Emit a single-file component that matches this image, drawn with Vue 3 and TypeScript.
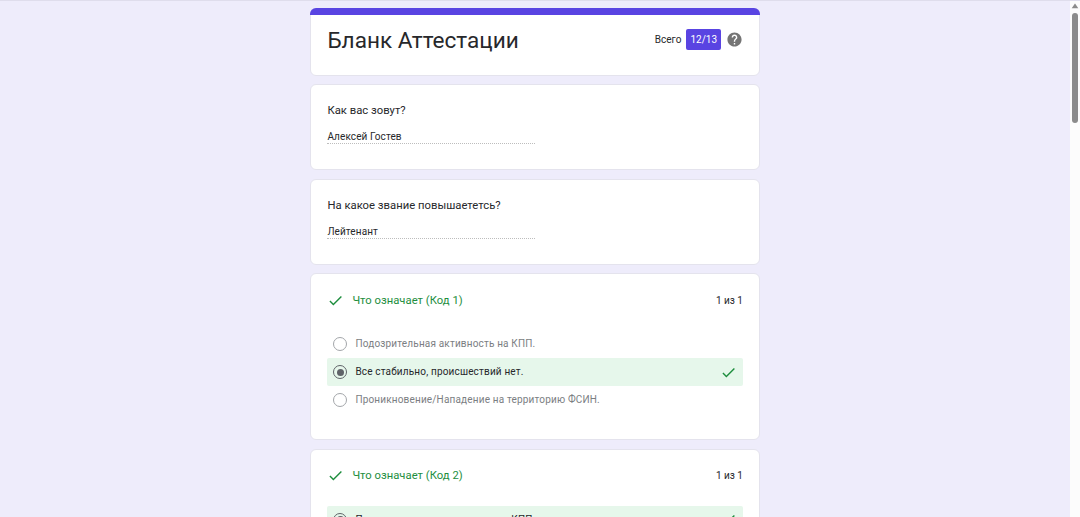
<script setup lang="ts">
interface TextAnswer {
  question: string
  answer: string
}

interface ChoiceQuestion {
  title: string
  score: string
  options: string[]
  selected: number
}

const textAnswers: TextAnswer[] = [
  { question: 'Как вас зовут?', answer: 'Алексей Гостев' },
  { question: 'На какое звание повышаететсь?', answer: 'Лейтенант' },
]

const options = [
  'Подозрительная активность на КПП.',
  'Все стабильно, происшествий нет.',
  'Проникновение/Нападение на территорию ФСИН.',
]

const questions: ChoiceQuestion[] = [
  { title: 'Что означает (Код 1)', score: '1 из 1', options, selected: 1 },
  { title: 'Что означает (Код 2)', score: '1 из 1', options, selected: 0 },
]
</script>

<template>
  <div class="page">
    <aside class="help">
      <svg class="help-icon" viewBox="0 0 24 24">
        <path d="M11 18h2v-2h-2v2zm1-16C6.48 2 2 6.48 2 12s4.48 10 10 10 10-4.48 10-10S17.52 2 12 2zm0 18c-4.41 0-8-3.59-8-8s3.59-8 8-8 8 3.59 8 8-3.59 8-8 8zm0-14c-2.21 0-4 1.79-4 4h2c0-1.1.9-2 2-2s2 .9 2 2c0 2-3 1.75-3 5h2c0-2.25 3-2.5 3-5 0-2.21-1.79-4-4-4z" />
      </svg>
    </aside>

    <main class="form">
      <header class="card header">
        <div class="band"></div>
        <div class="header-row">
          <h1>Бланк Аттестации</h1>
          <div class="total">
            <span>Всего</span>
            <span class="badge">12/13</span>
            <svg class="total-help" viewBox="0 0 24 24">
              <path d="M12 2C6.48 2 2 6.48 2 12s4.48 10 10 10 10-4.48 10-10S17.52 2 12 2zm1 17h-2v-2h2v2zm2.07-7.75l-.9.92C13.45 12.9 13 13.5 13 15h-2v-.5c0-1.1.45-2.1 1.17-2.83l1.24-1.26c.37-.36.59-.86.59-1.41 0-1.1-.9-2-2-2s-2 .9-2 2H8c0-2.21 1.79-4 4-4s4 1.79 4 4c0 .88-.36 1.68-.93 2.25z" />
            </svg>
          </div>
        </div>
      </header>

      <section v-for="item in textAnswers" :key="item.question" class="card text-card">
        <div class="question">{{ item.question }}</div>
        <div class="answer">{{ item.answer }}</div>
      </section>

      <section v-for="item in questions" :key="item.title" class="card choice-card">
        <div class="choice-head">
          <svg class="check" viewBox="0 0 24 24">
            <path d="M9 16.17L4.83 12l-1.42 1.41L9 19 21 7l-1.41-1.41z" />
          </svg>
          <span class="choice-title">{{ item.title }}</span>
          <span class="score">{{ item.score }}</span>
        </div>
        <div
          v-for="(option, index) in item.options"
          :key="index"
          class="option"
          :class="{ selected: index === item.selected }"
        >
          <span class="radio"></span>
          <span class="option-text">{{ option }}</span>
          <svg v-if="index === item.selected" class="check" viewBox="0 0 24 24">
            <path d="M9 16.17L4.83 12l-1.42 1.41L9 19 21 7l-1.41-1.41z" />
          </svg>
        </div>
      </section>
    </main>

    <div class="scrollbar">
      <svg class="arrow" viewBox="0 0 8 6"><path d="M4 .5 7.3 5.3H.7z" /></svg>
      <div class="thumb"></div>
      <svg class="arrow down" viewBox="0 0 8 6"><path d="M4 5.5 7.3.7H.7z" /></svg>
    </div>
  </div>
</template>

<style>
body {
  margin: 0;
  overflow: hidden;
}
</style>

<style scoped>
.page {
  display: grid;
  grid-template-columns: 310px 450.4px 1fr 10px;
  height: 517px;
  overflow: hidden;
  box-sizing: border-box;
  border-top: 1px solid #dfddec;
  background: #eeecfb;
  font-family: Roboto, "Liberation Sans", sans-serif;
  font-size: 10px;
  letter-spacing: 0.1px;
  color: #27282b;
}

.help {
  display: flex;
  align-items: flex-end;
  padding: 0 0 10px 12px;
}

.help-icon {
  width: 17px;
  height: 17px;
  fill: #a09fab;
}

.form {
  display: flex;
  flex-direction: column;
  gap: 8.6px;
  padding-top: 7.4px;
}

.card {
  flex: none;
  box-sizing: border-box;
  border: 1px solid #e4e3ed;
  border-radius: 6px;
  background: #fff;
  padding: 0 16.4px;
}

.header {
  height: 67.2px;
}

.band {
  height: 7px;
  margin: -1px -17.4px 0;
  border-radius: 6px 6px 0 0;
  background: #5944e2;
}

.header-row {
  display: flex;
  align-items: center;
  justify-content: space-between;
  height: 49px;
}

h1 {
  margin: 0;
  padding-top: 3px;
  font-size: 22.55px;
  font-weight: 400;
  letter-spacing: 0;
  line-height: 32px;
}

.total {
  display: flex;
  align-items: center;
  letter-spacing: 0;
}

.badge {
  margin: 0 5px;
  padding: 0 4px;
  border-radius: 2px;
  background: #5944e2;
  color: #fff;
  line-height: 21px;
}

.total-help {
  width: 17px;
  height: 17px;
  fill: #757575;
}

.text-card {
  height: 86px;
  padding-top: 17px;
}

.question {
  font-size: 11.25px;
  letter-spacing: 0.02px;
  line-height: 17px;
}

.answer {
  width: 208px;
  margin-top: 11px;
  padding-top: 1px;
  border-bottom: 1px dotted #bdbdbd;
  line-height: 12px;
}

.choice-card {
  height: 167px;
}

.choice-head {
  display: flex;
  align-items: center;
  height: 50px;
  padding-top: 1px;
  margin-bottom: 5px;
}

.check {
  flex: none;
  width: 17px;
  height: 17px;
  fill: #1e8e3e;
}

.choice-title {
  flex: 1;
  margin-left: 8px;
  color: #1e8e3e;
  font-size: 11.25px;
  letter-spacing: 0.02px;
}

.score {
  letter-spacing: 0;
}

.option {
  display: flex;
  align-items: center;
  box-sizing: border-box;
  height: 28px;
  padding: 0 6px;
  border-radius: 2px;
  color: #7b7e82;
}

.option.selected {
  background: #e6f7eb;
  color: #27282b;
}

.radio {
  display: flex;
  align-items: center;
  justify-content: center;
  box-sizing: border-box;
  width: 14px;
  height: 14px;
  border: 1.4px solid #a3a6aa;
  border-radius: 50%;
}

.selected .radio {
  border-color: #5f6368;
}

.selected .radio::after {
  width: 7px;
  height: 7px;
  border-radius: 50%;
  background: #5f6368;
  content: '';
}

.option-text {
  flex: 1;
  margin-left: 8px;
  padding-bottom: 1px;
  letter-spacing: 0.17px;
}

.scrollbar {
  grid-column: 4;
  display: flex;
  flex-direction: column;
  align-items: center;
  box-sizing: border-box;
  padding: 2px 0;
  background: #fcfcfc;
}

.arrow {
  width: 8px;
  height: 6px;
  fill: #8b8b8b;
}

.arrow.down {
  margin-top: auto;
}

.thumb {
  width: 6px;
  height: 110px;
  margin-top: 4px;
  border-radius: 3px;
  background: #8b8b8b;
}
</style>
